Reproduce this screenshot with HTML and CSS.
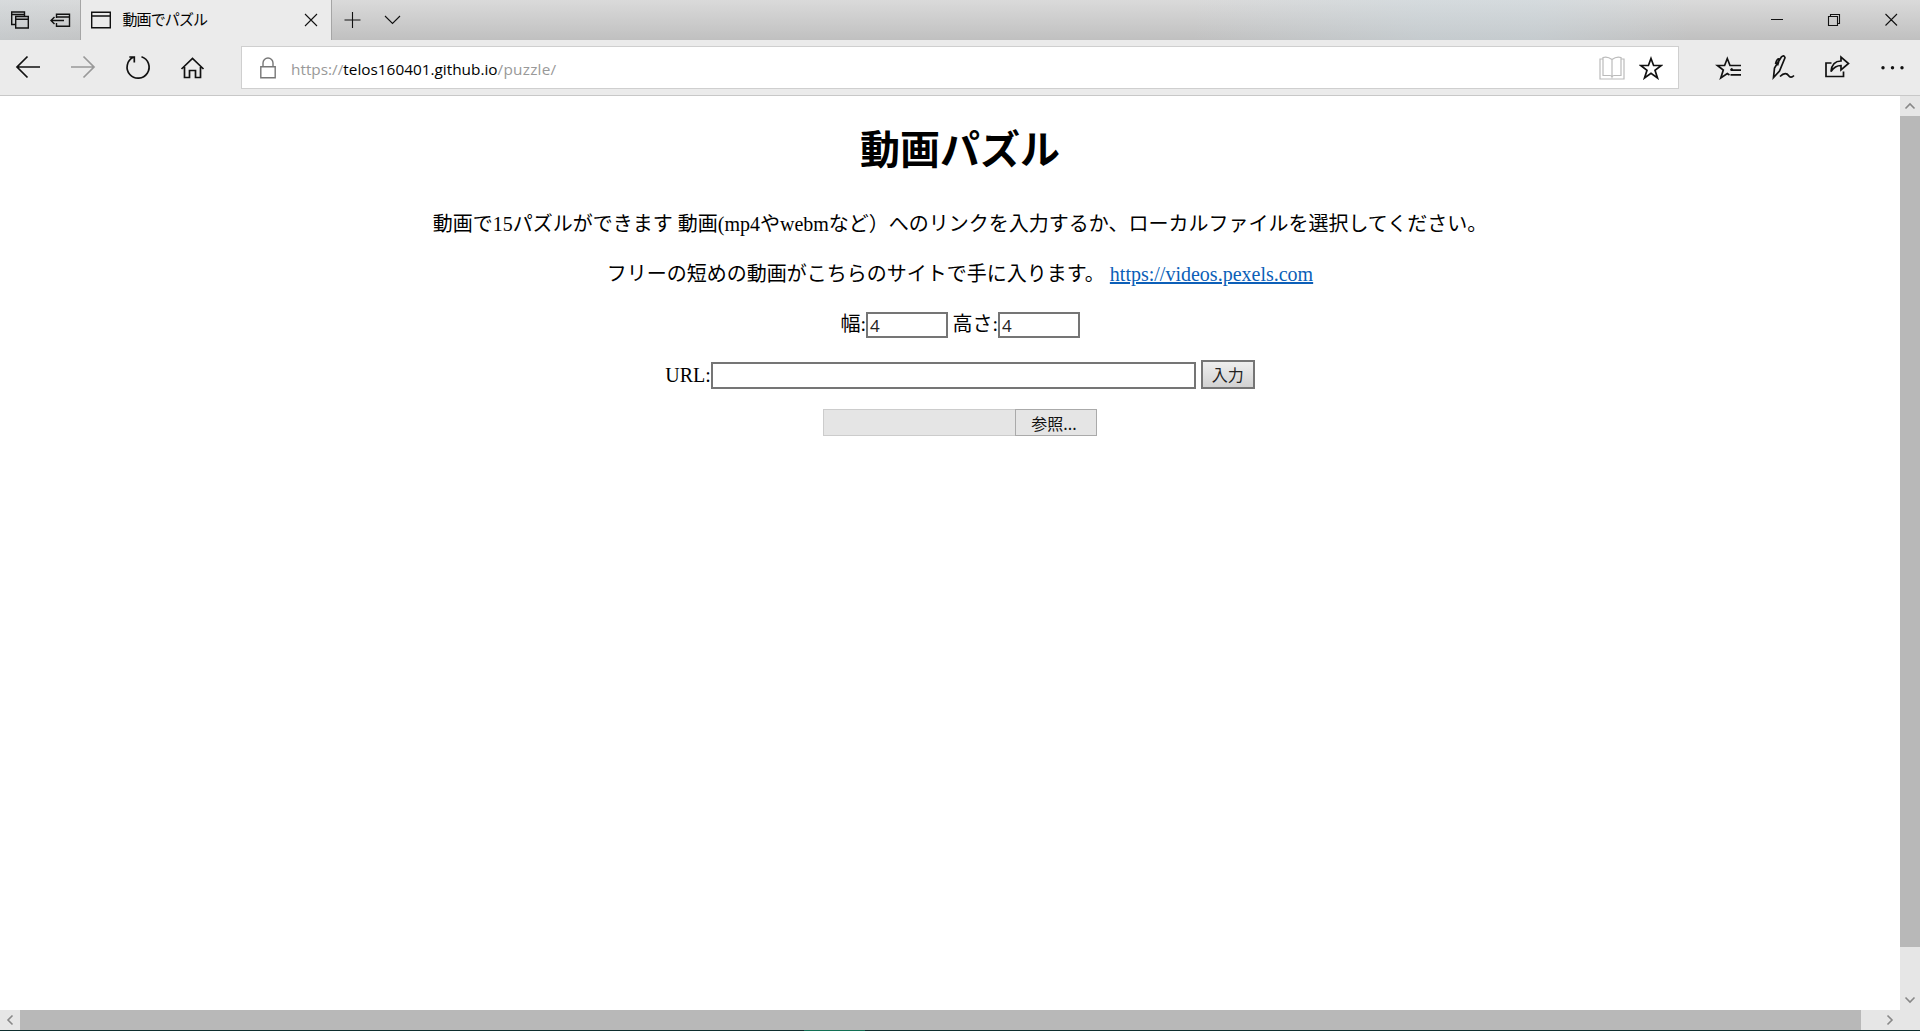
FILE: index.html
```html
<!DOCTYPE html>
<html lang="ja">
<head>
<meta charset="utf-8">
<title>動画でパズル</title>
<link rel="stylesheet" href="styles.css">
</head>
<body>
<header class="tabs">
  <div class="tab-tools">
    <svg class="icon" width="80" height="40" viewBox="0 0 80 40"><path d="M15 24.5H11.7V12H24.5V16M11.7 14.5H24M15.7 16.5H28.3V28H15.7ZM15.7 19.3H28.3"/><path d="M56.5 18V14.3H69.5V26.3H56.5V23M56.5 17H69.5M51 20.5H64M54.5 17L51 20.5L54.5 24"/></svg>
  </div>
  <div class="tab">
    <svg class="icon" width="20" height="18" viewBox="0 0 20 18"><path d="M.7 1.3H19.3V16.7H.7ZM.7 5H19.3"/></svg>
    <span class="tab-title">動画でパズル</span>
    <svg class="icon tab-close" width="14" height="14" viewBox="0 0 14 14"><path d="M1 1L13 13M13 1L1 13"/></svg>
  </div>
  <svg class="icon thin" width="80" height="40" viewBox="0 0 80 40"><path d="M12.5 20H28.5M20.5 12V28M53 16L60.5 23.5L68 16"/></svg>
  <svg class="icon thin window-tools" width="160" height="40" viewBox="0 0 160 40"><path d="M11 19.5H23M70.500 16.500V14.500H79.500V23.500H77.500M68.500 16.500H77.500V25.500H68.500ZM125.500 14L137 25.500M137 14L125.500 25.500"/></svg>
</header>
<nav class="toolbar">
  <svg class="icon bold nav-icons" width="241" height="55" viewBox="0 0 241 55"><path d="M17 27H40M27.5 16.5L17 27L27.5 37.5"/><path class="off" d="M71 27H94M83.5 16.5L94 27L83.5 37.5"/><path d="M141.5 16.7A11 11 0 1 1 133.2 17.3M129.3 17H134.3V22.5"/><path d="M181.5 29L192.5 18.5L203.5 29M184.5 27V37.5H189.5V30.5H195.5V37.5H200.5V27"/></svg>
  <div class="address">
    <svg class="icon lock" width="16" height="22" viewBox="0 0 16 22"><path d="M.8 9.8H15.2V20.8H.8ZM3 9.5V6A5 5 0 0 1 13 6V9.5"/></svg>
    <span class="url"><span class="scheme">https://</span><span class="host">telos160401.github.io</span><span class="path">/puzzle/</span></span>
    <svg class="icon book" width="26" height="24" viewBox="0 0 26 24"><path d="M4 3H1V23H25V3H22M13 3.5V20M13 3.5Q8.500 0 4 1.500V19.500H11Q12.500 19.500 13 21Q13.500 19.500 15 19.500H22V1.500Q17.500 0 13 3.500"/></svg>
    <svg class="icon bold star" width="24" height="24" viewBox="0 0 24 24"><path d="M12 2.500L14.600 9.500H22.300L16 14.200L18.500 22L12 17.400L5.500 22L8 14.200L1.700 9.500H9.400Z"/></svg>
  </div>
  <svg class="icon bold" width="240" height="55" viewBox="0 0 240 55"><path d="M62 25.500H51L48.300 18.500L45.600 25.500H38.500L44.300 30L41.800 38L48.300 33.500L50.500 35M51.500 30L53.500 28.500M51.500 30.200H62M51.500 34.800H62"/><path d="M94.500 37.500L95.500 28L102.200 17.200Q105 14.300 106 17.800L100.500 31ZM98.500 25.500L100.500 19Q98 18 96.500 24M101 36.500C105 32.500 108 33 109.500 35.500S113 37.500 115 35.500"/><path d="M152.500 23H147V36.500H164.500V31.500M152 31.500Q153 21 162 21V17L169.500 23.500L162 30V25.500Q156 25.500 152 31.500Z"/><g class="dots"><circle cx="204" cy="27.700" r="1.700"/><circle cx="213.500" cy="27.700" r="1.700"/><circle cx="223" cy="27.700" r="1.700"/></g></svg>
</nav>
<div class="view">
  <main class="page">
    <h1 class="heading">動画パズル</h1>
    <p class="line intro">動画で15パズルができます 動画(mp4やwebmなど）へのリンクを入力するか、ローカルファイルを選択してください。</p>
    <p class="line source"><span>フリーの短めの動画がこちらのサイトで手に入ります。</span> <a class="link" href="#">https://videos.pexels.com</a></p>
    <div class="row size-row"><label class="caption">幅:</label><input class="field size" value="4"><label class="caption next">高さ:</label><input class="field size" value="4"></div>
    <div class="row url-row"><label class="caption">URL:</label><input class="field link-field"><button class="submit">入力</button></div>
    <div class="row"><div class="file-name"></div><button class="browse">参照...</button></div>
  </main>
  <div class="vbar">
    <svg class="icon arrow" width="20" height="20" viewBox="0 0 20 20"><path d="M5.500 12.500L10 8L14.500 12.500"/></svg>
    <div class="vthumb"></div>
    <svg class="icon arrow" width="20" height="20" viewBox="0 0 20 20"><path d="M5.500 7.500L10 12L14.500 7.500"/></svg>
  </div>
</div>
<div class="hbar">
  <svg class="icon arrow" width="20" height="20" viewBox="0 0 20 20"><path d="M12.500 5.500L8 10L12.500 14.500"/></svg>
  <div class="hthumb"></div>
  <svg class="icon arrow right" width="20" height="20" viewBox="0 0 20 20"><path d="M7.500 5.500L12 10L7.500 14.500"/></svg>
</div>
<footer class="edge"><div class="edge-active"></div></footer>
</body>
</html>
```
FILE: styles.css
```css
* { box-sizing: border-box; }
body { margin: 0; width: 1920px; height: 1031px; overflow: hidden; display: flex; flex-direction: column; background: #fff; color: #000; font-family: "Liberation Serif", "Noto Sans CJK JP", serif; }
.icon { display: block; flex: none; fill: none; stroke: #111; stroke-width: 1.4; }
.thin { stroke-width: 1.1; }
.bold { stroke-width: 1.7; }
.off { stroke: #999; }
.dots { fill: #111; stroke: none; }

.tabs { height: 40px; flex: none; display: flex; background: linear-gradient(90deg, rgba(210,221,227,.3), rgba(210,221,227,0) 8%, rgba(210,221,227,0) 62%, rgba(205,220,228,.38) 74%, rgba(205,220,228,.38) 80%, rgba(210,221,227,0) 88%), linear-gradient(#dadada, #c0c0c0); }
.tab { width: 252px; height: 40px; display: flex; align-items: center; padding: 0 13px 0 10px; background: #ebebeb; border-left: 1px solid #a5a5a5; border-right: 1px solid #a5a5a5; }
.tab-title { margin: -3px 0 0 11.5px; font: 15px/20px "Noto Sans CJK JP", sans-serif; letter-spacing: -.9px; white-space: nowrap; }
.tab-close { margin-left: auto; stroke-width: 1.1; }
.window-tools { margin-left: auto; }

.toolbar { height: 56px; flex: none; display: flex; background: #ebebeb; border-bottom: 1px solid #c8c8c8; }
.address { width: 1438px; height: 43px; margin-top: 6px; display: flex; align-items: center; padding: 0 15px 0 17.5px; background: #fff; border: 1px solid #cfcfcf; }
.lock { stroke: #777; }
.url { margin-left: 15.5px; padding-top: 2px; display: flex; font: 15.35px/20px "Open Sans", sans-serif; color: #999; white-space: nowrap; }
.host { color: #000; }
.path { letter-spacing: .25px; }
.book { margin-left: auto; stroke: #bbb; stroke-width: 1.2; }
.star { margin-left: 14.5px; }

.view { height: 914px; flex: none; display: flex; }
.page { width: 1900px; display: flex; flex-direction: column; align-items: center; padding-left: 20px; }
.heading { margin: 21px 0 0; font: bold 40px/60px "Noto Sans CJK JP", sans-serif; white-space: nowrap; }
.line { margin: 0; font-size: 20px; line-height: 30px; white-space: nowrap; }
.intro { margin-top: 32px; }
.source { margin-top: 20px; }
.link { color: #0c5fb8; text-decoration: underline; }
.row { display: flex; align-items: flex-end; }
.size-row { margin-top: 23px; height: 26px; }
.url-row { margin: 22px 0 20px; height: 29px; }
.caption { font-size: 20px; line-height: 26px; padding-bottom: 1px; white-space: nowrap; }
.next { margin-left: 5px; }
.field { border: 2px solid #757575; background: #fff; padding: 0 2px; font: 17px/20px "Open Sans", sans-serif; color: #222; }
.size { width: 81.5px; height: 26px; }
.link-field { width: 485px; height: 27px; }
.submit { width: 54px; height: 29px; margin-left: 5px; padding: 0 0 2px; border: 2px solid #757575; background: linear-gradient(#eee, #d2d2d2); color: #222; font: 16px/22px "Noto Sans CJK JP", sans-serif; }
.file-name { width: 192px; height: 27px; background: #e5e5e5; border: 1px solid #ccc; border-right: 0; }
.browse { width: 82px; height: 27px; padding: 0 4px 0 0; border: 1px solid #aaa; background: #e5e5e5; color: #111; font: 16px/22px "Noto Sans CJK JP", sans-serif; }

.vbar { width: 20px; display: flex; flex-direction: column; justify-content: space-between; background: #e6e6e6; }
.vthumb { height: 831px; margin-bottom: auto; background: #b8b8b8; }
.hbar { height: 20px; flex: none; display: flex; background: #e6e6e6; }
.hthumb { width: 1841px; background: #b8b8b8; }
.right { margin-left: 19px; }
.arrow { stroke: #888; stroke-width: 1.6; }
.edge { height: 1px; flex: none; padding-left: 804px; background: #0e2e2e; }
.edge-active { width: 61px; height: 1px; background: #127055; }
```
